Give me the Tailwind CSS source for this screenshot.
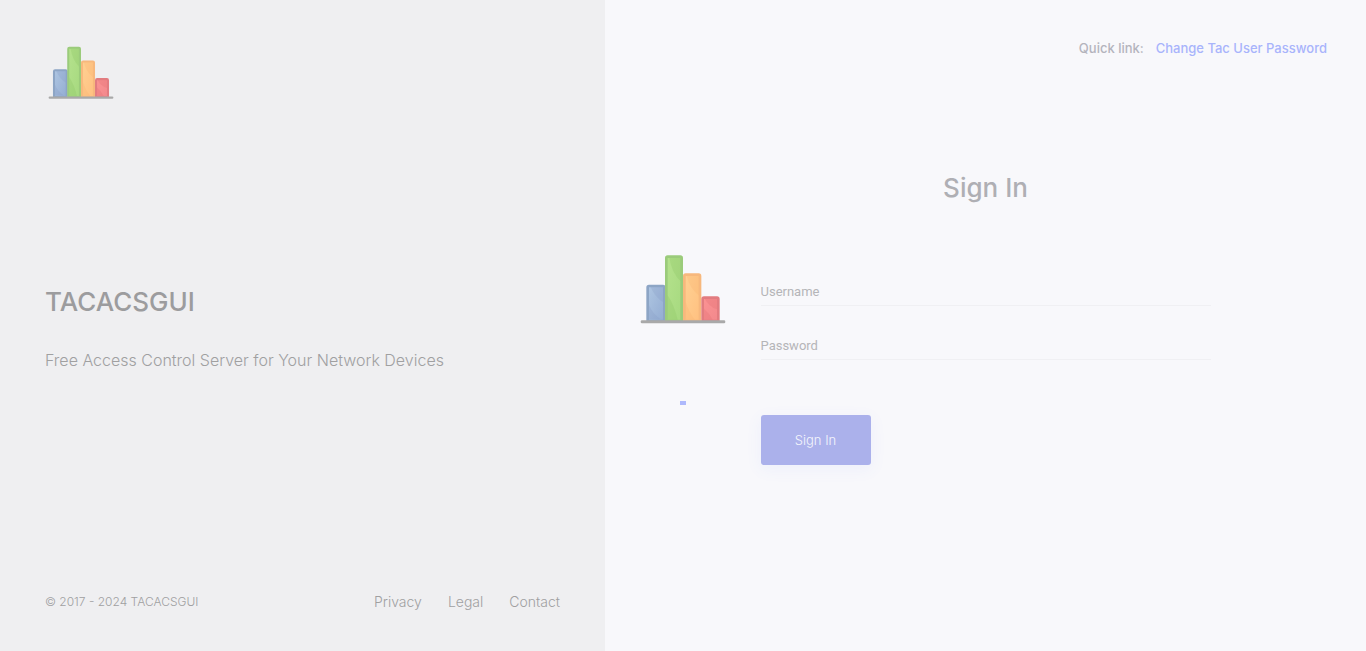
<!DOCTYPE html>
<html lang="en">
<head>
<meta charset="utf-8">
<meta name="viewport" content="width=device-width, initial-scale=1">
<title>TACACSGUI</title>
<script src="https://cdn.jsdelivr.net/npm/@tailwindcss/browser@4"></script>
</head>
<body class="flex min-h-screen bg-[#f8f8fb] font-['Inter','Liberation_Sans',sans-serif] text-[13px] leading-5">
<svg class="absolute h-0 w-0" aria-hidden="true">
  <defs>
    <linearGradient id="blue" x2="1" y2="1"><stop stop-color="#afc6e2"/><stop offset="1" stop-color="#93acd2"/></linearGradient>
    <linearGradient id="green" x2="1" y2="1"><stop stop-color="#b5e28d"/><stop offset="1" stop-color="#a6d97f"/></linearGradient>
    <linearGradient id="orange" x2="1" y2="1"><stop stop-color="#ffd193"/><stop offset="1" stop-color="#ffc080"/></linearGradient>
    <linearGradient id="red" x2="1" y2="1"><stop stop-color="#fb9393"/><stop offset="1" stop-color="#f2888c"/></linearGradient>
    <symbol id="chart" viewBox="30 29 258 208">
      <g stroke-width="8" stroke-linejoin="round">
        <path d="M53 229V128q0-4 4-4h42q4 0 4 4v101z" fill="url(#blue)" stroke="#8da5c5"/>
        <path d="M109 229V40q0-4 4-4h38q4 0 4 4v189z" fill="url(#green)" stroke="#9bcb7b"/>
        <path d="M163 229V94q0-4 4-4h39q4 0 4 4v135z" fill="url(#orange)" stroke="#f7b87d"/>
        <path d="M218 229v-66q0-4 4-4h39q4 0 4 4v66z" fill="url(#red)" stroke="#e27c80"/>
      </g>
      <g fill="#7c91bd" fill-opacity=".2"><path d="M62 128q15 32 37 44v-44H62z"/><path d="M57 181q10 25 34 42H57z"/></g>
      <g fill="#7bb957" fill-opacity=".2"><path d="M118 40q8 46 33 69V40z"/><path d="M113 152q20 30 30 73h-30z"/></g>
      <g fill="#f7a862" fill-opacity=".2"><path d="M170 94q10 38 36 58V94z"/><path d="M167 171q9 30 28 54h-28z"/></g>
      <g fill="#d9656b" fill-opacity=".22"><path d="M225 163q10 22 36 31v-31z"/><path d="M222 192q15 12 26 33h-26z"/></g>
      <rect x="32" y="227" width="254" height="9" rx="4" fill="#a9a9a9"/>
    </symbol>
  </defs>
</svg>

<aside class="flex w-[605px] max-w-[45%] shrink-0 flex-col justify-between bg-[#efeff1] px-[45px] pt-[46px] pb-[39px] text-[#a0a0a1]">
  <a href="#" aria-label="TACACSGUI home" class="block w-fit pl-[3px]">
    <svg class="h-[53px] w-[66px]" aria-hidden="true"><use href="#chart"/></svg>
  </a>
  <div class="pb-9">
    <h1 class="text-[26px] leading-9 font-medium text-[#9c9c9e]">TACACSGUI</h1>
    <p class="mt-7 text-[16px] leading-6 font-light">Free Access Control Server for Your Network Devices</p>
  </div>
  <footer class="flex items-center justify-between font-light">
    <span class="text-[12px]">© 2017 - 2024 TACACSGUI</span>
    <nav class="flex gap-[26px] text-[14px]">
      <a href="#">Privacy</a>
      <a href="#">Legal</a>
      <a href="#">Contact</a>
    </nav>
  </footer>
</aside>

<main class="flex min-w-0 flex-1 flex-col">
  <div class="flex justify-end gap-3 pt-[38px] pr-[39px] font-medium">
    <span class="text-[#b4b4bd]">Quick link:</span>
    <a href="#" class="text-[#a8b4fb]">Change Tac User Password</a>
  </div>
  <h2 class="mt-28 text-center text-[26px] leading-9 font-medium text-[#afafb4]">Sign In</h2>
  <div class="mt-12 grid grid-cols-[1fr_minmax(0,450px)_1fr]">
    <div class="flex flex-col items-center">
      <svg class="h-[70px] w-[86px]" aria-hidden="true"><use href="#chart"/></svg>
      <span class="mt-[77px] h-1 w-1.5 bg-[#aeb9fc]" role="status" aria-label="Loading"></span>
    </div>
    <form class="flex flex-col pt-6 font-['Roboto',sans-serif]">
      <input type="text" name="username" aria-label="Username" placeholder="Username" class="h-7 border-b border-[#f0f0f3] pb-px outline-none placeholder:text-[#b5b5b8]">
      <input type="password" name="password" aria-label="Password" placeholder="Password" class="mt-[26px] h-7 border-b border-[#f0f0f3] pb-px outline-none placeholder:text-[#b5b5b8]">
      <button type="submit" class="mt-[55px] h-[50px] w-[110px] rounded-[3px] bg-[#abb1eb] font-['Inter',sans-serif] font-light text-[#f4f5fc] shadow-[0_4px_16px_1px_rgba(93,120,255,0.06)]">Sign In</button>
    </form>
  </div>
</main>
</body>
</html>
